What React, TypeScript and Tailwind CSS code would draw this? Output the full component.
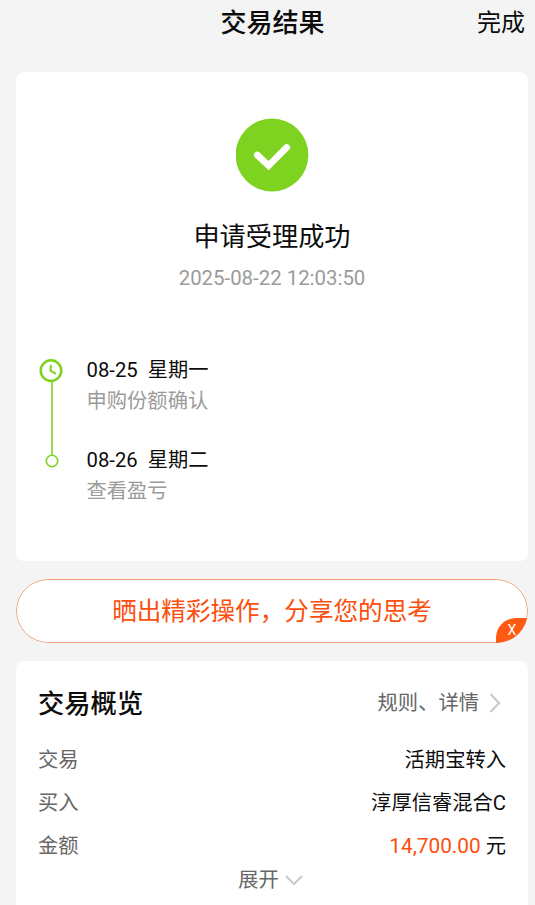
const steps = [
  { date: "08-25", day: "星期一", text: "申购份额确认" },
  { date: "08-26", day: "星期二", text: "查看盈亏" },
]

const rows = [
  { label: "交易", value: "活期宝转入" },
  { label: "买入", value: "淳厚信睿混合C" },
  { label: "金额", value: "元", amount: "14,700.00" },
]

function Timeline() {
  return (
    <svg width="24" height="112" viewBox="0 0 24 112" fill="none" stroke="#7ed321" className="mt-px shrink-0">
      <circle cx="12" cy="11.6" r="10.3" strokeWidth="2.5" />
      <path d="M11.7 6.8v5l4.4 2.5" strokeWidth="2.1" strokeLinecap="round" strokeLinejoin="round" />
      <path d="M13 22.6v73.4" strokeWidth="1.6" />
      <circle cx="13" cy="102" r="5.7" strokeWidth="1.6" />
    </svg>
  )
}

export default function App() {
  return (
    <div className="h-[905px] overflow-hidden bg-[#f4f4f4] pl-4 pr-[7px] font-['Roboto','Noto_Sans_CJK_SC',sans-serif] text-[20.3px] text-[#0c0c0c]">
      <header className="grid h-[72px] grid-cols-[1fr_auto_1fr] items-start">
        <span />
        <h1 className="pt-[5px] pl-px text-[26px] font-medium leading-9">交易结果</h1>
        <button className="justify-self-end pt-[5px] pr-[3px] text-[24px] leading-9">完成</button>
      </header>

      <section className="h-[489px] rounded-lg bg-white pt-[46px]">
        <svg width="73" height="74" viewBox="0 0 73 74" className="mx-auto block">
          <circle cx="36" cy="37" r="36.4" fill="#7ed321" />
          <path d="M21.3 37L32.6 47.6L50.7 29.4" fill="none" stroke="#fff" strokeWidth="6.6" strokeLinecap="round" />
        </svg>
        <h2 className="mt-[25px] text-center text-[26.2px] leading-10">申请受理成功</h2>
        <p className="mt-[7px] text-center text-[20.4px] leading-7 text-[#9b9b9b]">2025-08-22 12:03:50</p>

        <div className="mt-[66px] flex gap-[23.5px] pl-[23px]">
          <Timeline />
          <div className="-mt-[3px] flex flex-col gap-[30px]">
            {steps.map((step) => (
              <div key={step.date} className="leading-[30px]">
                <p className="flex gap-[10px]">
                  <span>{step.date}</span>
                  <span>{step.day}</span>
                </p>
                <p className="pt-px -mb-px text-[#9b9b9b]">{step.text}</p>
              </div>
            ))}
          </div>
        </div>
      </section>

      <div className="relative mt-[18px] h-16 overflow-hidden rounded-full">
        <div className="flex h-full items-center justify-center rounded-full border border-[#eba27c] bg-white">
          <span className="pt-[2px] text-[24.6px] leading-9 text-[#fc4e0c]">晒出精彩操作，分享您的思考</span>
        </div>
        <button className="absolute right-0 bottom-0 h-[25px] w-8 rounded-tl-[20px] bg-[#ff5a12] text-[14px] leading-[25px] text-white">X</button>
      </div>

      <section className="mt-[18px] h-[260px] rounded-lg bg-white pl-[22px] pr-[22px] pt-[22px]">
        <div className="flex h-10 items-center justify-between">
          <h2 className="pt-[3px] text-[26.3px] font-medium">交易概览</h2>
          <a className="flex items-center gap-[10px] text-[#666]">
            规则、详情
            <svg width="13" height="20" viewBox="0 0 13 20" fill="none" stroke="#c8c8c8" strokeWidth="2" className="mr-1 -mt-px">
              <path d="M1.5 1l8.6 9l-8.6 9" />
            </svg>
          </a>
        </div>
        <dl className="mt-4">
          {rows.map((row) => (
            <div key={row.label} className="flex h-[43px] items-center justify-between">
              <dt className="text-[#666]">{row.label}</dt>
              <dd>
                {row.amount && <span className="mr-[5px] text-[20.8px] text-[#fc4e0c]">{row.amount}</span>}
                {row.value}
              </dd>
            </div>
          ))}
        </dl>
        <button className="mx-auto flex h-6 items-center gap-[6px] pr-[3px] text-[#666]">
          展开
          <svg width="18" height="12" viewBox="0 0 18 12" fill="none" stroke="#c8c8c8" strokeWidth="2">
            <path d="M1 2l8 8l8-8" />
          </svg>
        </button>
      </section>
    </div>
  )
}
